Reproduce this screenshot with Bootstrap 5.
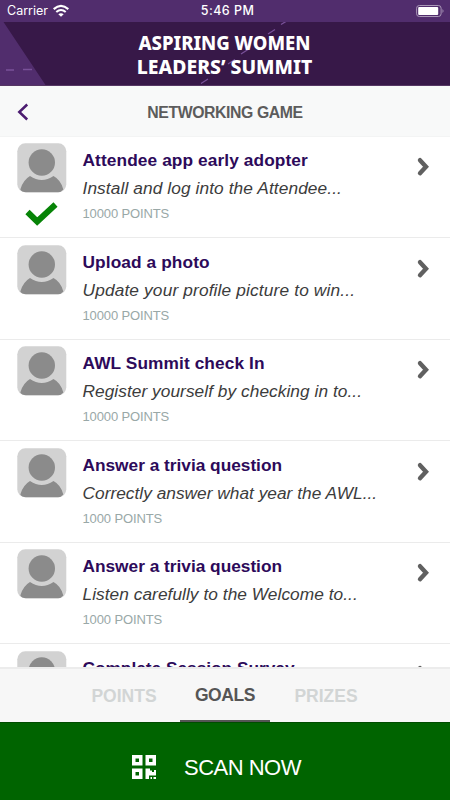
<!DOCTYPE html>
<html lang="en">
<head>
<meta charset="utf-8">
<meta name="viewport" content="width=device-width, initial-scale=1">
<title>Networking Game</title>
<link href="https://cdn.jsdelivr.net/npm/bootstrap@5.3.0/dist/css/bootstrap.min.css" rel="stylesheet">
<style>
body{font-family:"Liberation Sans",Arial,sans-serif;color:#3c3c3c}
.screen{height:800px}
.status-bar{height:22px;background:#512d6d;font:12.5px/22px Inter,sans-serif;padding:0 6px 0 7px}
.status-bar .clock{font-weight:500;letter-spacing:.45px;padding-left:4px}
.status-bar .side{width:100px}
.banner{height:64px;background:#371848;border-bottom:1px solid #563764}
.banner-art{inset:0}
.banner-title{font:800 20px/24px "Noto Sans","Open Sans",sans-serif;padding:9px 1px 0 0}
.banner-title span{display:block;white-space:nowrap}
.banner-title .line-a{transform:scaleX(.923)}
.banner-title .line-b{transform:scaleX(.969)}
.title-bar{height:50.5px;background:#f8f9f9;padding-left:16px;border-bottom:1px solid #f3f4f4}
.title-bar h1{font-size:15.8px;font-weight:700;color:#5c5c5c;line-height:20px;letter-spacing:-.4px}
.back{left:17px;top:17px}
.goal{height:101.5px;padding:6.700px 20.500px 0 17px;border-bottom:1px solid #ebebeb}
.avatar{width:50px}
.goal-text{padding:0 0 0 15.5px}
.goal h2{font-size:17.3px;font-weight:700;color:#2d0a5a;line-height:20px;margin:7px 0 0;letter-spacing:.1px}
.goal p{font-size:17.3px;font-style:italic;line-height:20px;margin:8px 0 0;letter-spacing:.05px}
.goal:nth-child(1) p{letter-spacing:.1px}
.goal:nth-child(2) p{letter-spacing:.15px}
.goal:nth-child(4) p{letter-spacing:.02px}
.goal:nth-child(n+4) h2{letter-spacing:-.01px}
.goal small{font-size:13px;line-height:16px;color:#99a8a7;margin-top:8.300px;display:block;letter-spacing:-.13px}
.goal .go{margin-top:14px}
.tabs{height:55px;background:#f7f7f7;border-top:2px solid #ececec}
.tabs a{width:90px;margin:0 5.5px;font-size:17.5px;font-weight:700;color:#d2d5d5;line-height:54px;height:53px}
.tabs a.active{color:#555;border-bottom:2px solid #555;letter-spacing:-.4px;line-height:53px}
.scan{height:78px;background:#006400;border-top:1px solid #004c00;padding:11px 17px 0 0;font-size:22px;gap:28px}
.scan span{letter-spacing:-.5px}
</style>
<script src="https://cdn.jsdelivr.net/npm/bootstrap@5.3.0/dist/js/bootstrap.bundle.min.js"></script>
</head>
<body>
<svg class="d-none">
<symbol id="person" viewBox="0 0 50 50"><rect x=".3" y=".3" width="49" height="49" rx="8" fill="#d2d2d2"/><circle cx="24.8" cy="19.5" r="13.2" fill="#8b8b8b"/><path d="M13 33Q24.8 41 36.5 33Q44 37 46.3 46.500Q44 49.300 41 49.300H9Q5 49.300 3.300 46.500Q6 37 13 33Z" fill="#8b8b8b"/></symbol>
<symbol id="next" viewBox="0 0 14 20"><path d="M4 3.200L10 9.700L4 16.200" fill="none" stroke="#606060" stroke-width="4.400" stroke-linecap="round" stroke-linejoin="miter"/></symbol>
</svg>
<div class="screen d-flex flex-column overflow-hidden bg-white">
  <div class="status-bar d-flex justify-content-between text-white flex-shrink-0">
    <div class="side d-flex align-items-center"><span>Carrier</span>
      <svg class="ms-1" width="18" height="14" viewBox="0 0 18 14" fill="none" stroke="#fff" stroke-width="2.100"><path d="M1.700 5.100Q9 -1.500 16.300 5.100M4.300 8Q9 4 13.700 8"/><path d="M9 12.800L6.300 10.200Q9 8.100 11.700 10.200Z" fill="#fff" stroke="none"/></svg>
    </div>
    <span class="clock">5:46 PM</span>
    <div class="side d-flex align-items-center justify-content-end"><svg width="28" height="14" viewBox="0 0 28 14"><rect x=".6" y="1.500" width="24.500" height="11" rx="2.700" fill="none" stroke="#aa98b8"/><rect x="2.200" y="3" width="20" height="8" rx="1" fill="#fff"/><path d="M26.500 5q2 2 0 4z" fill="#aa98b8"/></svg></div>
  </div>
  <header class="banner position-relative text-white text-center flex-shrink-0">
    <svg class="banner-art position-absolute" width="450" height="63" viewBox="0 22 450 63"><path d="M0 22H3.500L45.500 85H0Z" fill="#512d6d"/><path d="M6 70H14M23 69.500H32M201 83.500L208 79M228 64L235 59.500M241 54L248 49.500M268 34L275 29.500M281 24.500L286 21.500" stroke="#795199" stroke-width="1.300"/></svg>
    <div class="banner-title position-relative"><span class="line-a">ASPIRING WOMEN</span><span class="line-b">LEADERS’ SUMMIT</span></div>
  </header>
  <div class="title-bar position-relative d-flex align-items-center justify-content-center flex-shrink-0 pe-3">
    <svg class="back position-absolute" width="12" height="18" viewBox="0 0 12 18"><path d="M10.200 1.500L2.300 9L10.200 16.500" fill="none" stroke="#4b1c70" stroke-width="2.500"/></svg>
    <h1 class="m-0 pt-1">NETWORKING GAME</h1>
  </div>
  <main class="flex-grow-1 overflow-hidden">
    <article class="goal d-flex"><div class="avatar flex-shrink-0"><svg class="d-block" width="50" height="50"><use href="#person"/></svg><svg class="d-block mt-2 ms-2" width="34" height="26" viewBox="0 0 34 26"><path d="M2.500 11L12.200 20.500L30.500 3.500" fill="none" stroke="#078407" stroke-width="6"/></svg></div><div class="goal-text flex-grow-1 text-nowrap"><h2>Attendee app early adopter</h2><p>Install and log into the Attendee...</p><small>10000 POINTS</small></div><svg class="go" width="14" height="20"><use href="#next"/></svg></article>
    <article class="goal d-flex"><div class="avatar flex-shrink-0"><svg width="50" height="50"><use href="#person"/></svg></div><div class="goal-text flex-grow-1 text-nowrap"><h2>Upload a photo</h2><p>Update your profile picture to win...</p><small>10000 POINTS</small></div><svg class="go" width="14" height="20"><use href="#next"/></svg></article>
    <article class="goal d-flex"><div class="avatar flex-shrink-0"><svg width="50" height="50"><use href="#person"/></svg></div><div class="goal-text flex-grow-1 text-nowrap"><h2>AWL Summit check In</h2><p>Register yourself by checking in to...</p><small>10000 POINTS</small></div><svg class="go" width="14" height="20"><use href="#next"/></svg></article>
    <article class="goal d-flex"><div class="avatar flex-shrink-0"><svg width="50" height="50"><use href="#person"/></svg></div><div class="goal-text flex-grow-1 text-nowrap"><h2>Answer a trivia question</h2><p>Correctly answer what year the AWL...</p><small>1000 POINTS</small></div><svg class="go" width="14" height="20"><use href="#next"/></svg></article>
    <article class="goal d-flex"><div class="avatar flex-shrink-0"><svg width="50" height="50"><use href="#person"/></svg></div><div class="goal-text flex-grow-1 text-nowrap"><h2>Answer a trivia question</h2><p>Listen carefully to the Welcome to...</p><small>1000 POINTS</small></div><svg class="go" width="14" height="20"><use href="#next"/></svg></article>
    <article class="goal d-flex"><div class="avatar flex-shrink-0"><svg width="50" height="50"><use href="#person"/></svg></div><div class="goal-text flex-grow-1 text-nowrap"><h2>Complete Session Survey</h2></div><svg class="go" width="14" height="20"><use href="#next"/></svg></article>
  </main>
  <nav class="tabs d-flex justify-content-center flex-shrink-0 text-center">
    <a class="text-decoration-none" href="#">POINTS</a><a class="active text-decoration-none" href="#">GOALS</a><a class="text-decoration-none" href="#">PRIZES</a>
  </nav>
  <button class="scan btn rounded-0 border-start-0 border-end-0 border-bottom-0 text-white d-flex align-items-center justify-content-center flex-shrink-0">
    <svg width="24" height="24" viewBox="0 0 24 24" fill="#fff" fill-rule="evenodd"><path d="M0 0H10.500V10.500H0ZM3.500 3.500V7H7V3.500ZM13.500 0H24V10.500H13.500ZM17 3.500V7H20.500V3.500ZM0 13.500H10.500V24H0ZM3.500 17V20.500H7V17ZM13.500 13.500H18V15.500H20V17H22V15H24V20.500H17V24H13.500ZM18.500 22H20V24H18.500ZM21.500 22H24V24H21.500Z"/></svg>
    <span>SCAN NOW</span>
  </button>
</div>
</body>
</html>
